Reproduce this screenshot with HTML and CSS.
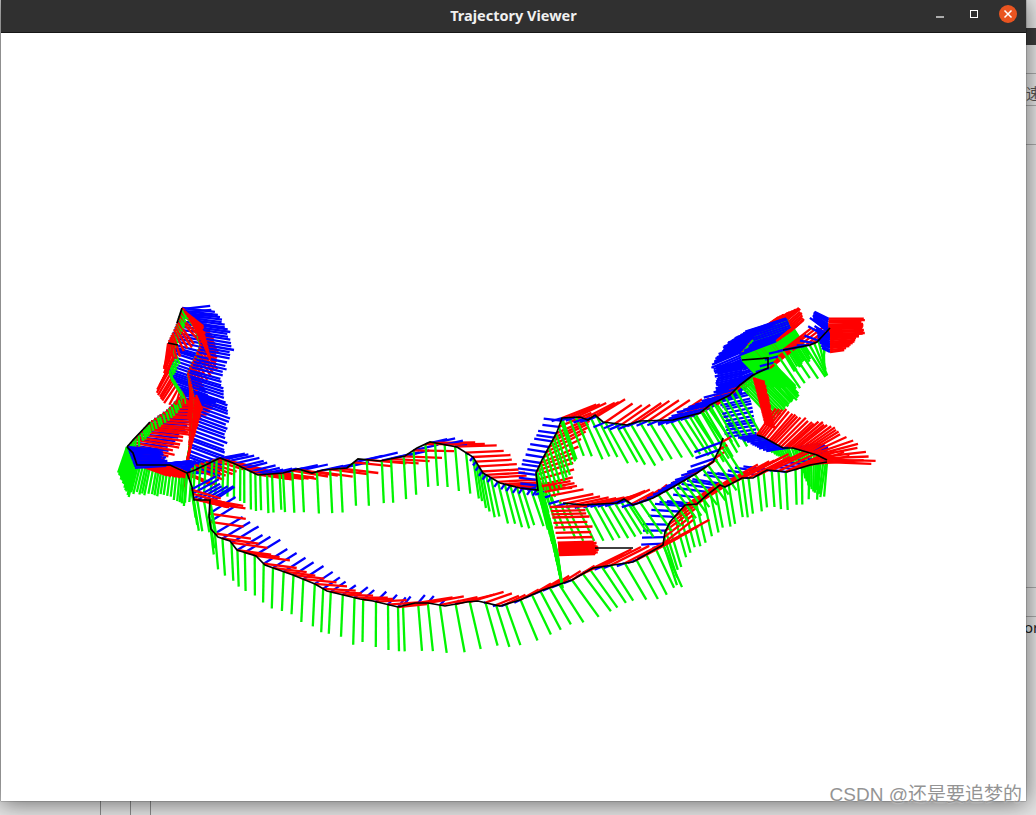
FILE: index.html
```html
<!DOCTYPE html>
<html lang="en">
<head>
<meta charset="utf-8">
<title>Trajectory Viewer</title>
<link rel="stylesheet" href="styles.css">
</head>
<body>
<div class="desktop">
  <div class="behind">
    <div class="behind-band"></div>
    <div class="behind-rule rule-a"></div>
    <div class="behind-rule rule-b"></div>
    <div class="behind-rule rule-c"></div>
    <div class="behind-rule rule-d"></div>
    <div class="behind-rule rule-e"></div>
    <span class="behind-text text-a">速</span>
    <span class="behind-text text-b">or</span>
    <div class="behind-col col-a"></div>
    <div class="behind-col col-b"></div>
    <div class="behind-col col-c"></div>
  </div>
  <section class="window">
    <header class="titlebar">
      <span></span>
      <h1 class="title">Trajectory Viewer</h1>
      <div class="controls">
        <svg class="ctl" width="8" height="8" viewBox="0 0 8 8"><path d="M0 7h8" stroke="#fff" stroke-width="1.2"/></svg>
        <svg class="ctl ctl-max" width="8" height="8" viewBox="0 0 8 8"><rect x=".5" y=".5" width="7" height="7" fill="none" stroke="#fff"/></svg>
        <svg class="ctl-close" width="18" height="18" viewBox="0 0 18 18"><circle cx="9" cy="9" r="9" fill="#e95420"/><path d="M5.5 5.5l7 7M12.5 5.5l-7 7" stroke="#fff" stroke-width="1.5"/></svg>
      </div>
    </header>
    <svg id="scene" class="scene" viewBox="1 33 1025 767" width="1025" height="767"></svg>
  </section>
  <div class="watermark">CSDN @还是要追梦的</div>
</div>
<script src="trajectory.js"></script>
</body>
</html>
```
FILE: styles.css
```css
* { box-sizing: border-box; }
html, body { margin: 0; height: 100%; }
body { background: #e4e4e4; overflow: hidden; font-family: "Noto Sans", "Noto Sans CJK SC", sans-serif; }
.desktop { position: relative; width: 1036px; height: 815px; overflow: hidden; }
.behind { position: absolute; inset: 0; }
.behind-band { position: absolute; left: 1026px; right: 0; top: 28px; height: 17px; background: #3c3c3c; }
.behind-rule { position: absolute; left: 1026px; right: 0; height: 1px; background: #a8a8a8; }
.rule-a { top: 73px; }
.rule-b { top: 105px; }
.rule-c { top: 144px; }
.rule-d { top: 587px; }
.rule-e { top: 616px; }
.behind-text { position: absolute; left: 1026px; font-size: 15px; line-height: 18px; white-space: nowrap; color: #555; }
.text-a { top: 84px; }
.text-b { top: 618px; color: #222; left: 1024px; }
.behind-col { position: absolute; top: 800px; bottom: 0; width: 1px; background: #8a8a8a; }
.col-a { left: 100px; }
.col-b { left: 130px; }
.col-c { left: 150px; }
.window {
  position: absolute; left: 1px; top: 0; width: 1025px; height: 801px;
  display: flex; flex-direction: column; background: #fff;
  box-shadow: 0 2px 22px rgba(0, 0, 0, .55), 0 0 1px rgba(0, 0, 0, .8);
}
.titlebar {
  flex: none; height: 33px; display: grid; grid-template-columns: 1fr auto 1fr; align-items: center;
  background: #303030; border-bottom: 1px solid #161616; color: #fff;
}
.title { margin: 0; font: 700 14.5px/1 "Noto Sans", sans-serif; color: #f0f0f0; padding-bottom: 2px; }
.controls { display: flex; justify-content: flex-end; align-items: center; padding-right: 9px; padding-bottom: 4px; }
.ctl { margin-right: 26px; }
.ctl-max { margin-right: 21px; }
.scene { flex: none; display: block; background: #fff; }
.scene line { stroke-width: 2.3; stroke-linecap: butt; }
.scene .r { stroke: #ff0000; }
.scene .g { stroke: #00f500; }
.scene .b { stroke: #0000ff; }
.scene .k { fill: none; stroke: #000; stroke-width: 1.7; stroke-linejoin: miter; }
.watermark {
  position: absolute; right: 14px; bottom: 7px; font-size: 19px; line-height: 26px; color: #949494;
  font-family: "Liberation Sans", "Noto Sans CJK SC", sans-serif; white-space: nowrap;
  text-shadow: 0 0 2px rgba(255, 255, 255, .8);
}
```
FILE: trajectory.js
```js
// Poses along the camera trajectory: each has a red, green and blue axis and the path is drawn in black.
// k: keyframes [t, green, red, blue] with t the fraction of the section length.
var sections = [
  // left tower, rising along the left side
  { p: [[127,447],[133,440],[150,422],[167,410],[183,393],[168,370],[175,353],[168,343],[177,323],[182,308]], s: 3.2, o: 'gbr',
    k: [[0,[-6,24],[44,10],[38,6]],[.12,[2,10],[44,6],[40,3]],[.35,[3,10],[44,0],[42,-3]],[.5,[3,10],[-14,20],[32,12]],[.75,[5,10],[-8,22],[32,10]],[1,[5,10],[30,24],[30,-4]]] },
  // left tower, coming back down the right side
  { p: [[182,308],[195,325],[200,345],[188,372],[195,400],[193,430],[187,465]], s: 3.2, o: 'gbr',
    k: [[0,[4,8],[28,24],[34,4]],[.3,[2,8],[14,24],[32,6]],[.55,[0,8],[-5,26],[34,12]],[1,[-4,14],[-4,26],[32,12]]] },
  // extra red over the tower
  { p: [[185,312],[205,345]], s: 2.6, o: 'r', k: [[0,[0,0],[18,14],[0,0]],[1,[0,0],[6,18],[0,0]]] },
  { p: [[196,395],[190,450]], s: 2, o: 'r', k: [[0,[0,0],[6,14],[0,0]],[1,[0,0],[-4,14],[0,0]]] },
  // base of the tower
  { p: [[187,473],[170,465],[137,465],[133,453],[127,447]], s: 2.6, o: 'rgb',
    k: [[0,[-2,30],[26,13],[34,0]],[.4,[-5,30],[28,13],[32,-4]],[1,[-9,26],[32,8],[30,2]]] },
  { p: [[127,447],[135,468]], s: 1.8, o: 'gb', k: [[0,[-9,26],[0,0],[32,3]],[1,[-6,28],[0,0],[30,-2]]] },
  // ridge to the middle
  { p: [[187,473],[195,465],[220,458],[233,463],[258,475],[283,473]], s: 6, o: 'gbr',
    k: [[0,[-3,32],[30,12],[30,-4]],[.6,[0,36],[34,6],[24,-6]],[1,[2,38],[36,4],[24,-5]]] },
  { p: [[283,473],[298,469],[312,473],[323,470],[347,468],[358,459],[380,461],[405,456],[417,448],[430,442],[457,447],[473,457]], s: 13, o: 'gbr',
    k: [[0,[2,40],[34,6],[24,-5]],[.5,[2,44],[38,3],[30,-7]],[.85,[3,42],[40,-1],[18,-4]],[1,[5,42],[38,-2],[-3,4]]] },
  { p: [[473,457],[483,473],[500,483],[520,488],[538,490]], s: 6.5, o: 'gbr',
    k: [[0,[6,42],[38,-2],[-3,4]],[1,[14,38],[36,-2],[-4,6]]] },
  // left wall of the middle loop
  { p: [[538,490],[536,473],[542,460],[557,432],[562,418]], s: 5.5, o: 'bgr',
    k: [[0,[10,40],[37,-7],[-18,-2]],[.5,[12,40],[38,-20],[-18,-3]],[1,[14,40],[33,-13],[-17,-2]]] },
  // top of the middle loop
  { p: [[562,418],[580,417],[588,420],[595,415],[603,422],[627,425],[640,421],[673,420],[700,413],[720,403]], s: 8.5, o: 'bgr',
    k: [[0,[14,40],[33,-13],[-10,3]],[.3,[23,41],[27,-19],[-12,5]],[1,[24,34],[37,-23],[-12,5]]] },
  // block beneath the right hand tower
  { p: [[745,380],[752,405],[757,435]], s: 3.4, o: 'b',
    k: [[0,[20,44],[10,22],[-28,8]],[1,[16,46],[8,22],[-30,4]]] },
  { p: [[743,362],[742,395]], s: 1.6, o: 'b', k: [[0,[0,0],[0,0],[-27,5]],[1,[0,0],[0,0],[-25,7]]] },
  // return along the ridge beneath the tower on the right
  { p: [[690,417],[700,413],[710,405],[730,395],[740,385]], s: 6, o: 'brg',
    k: [[0,[27,45],[30,-22],[-32,6]],[1,[25,45],[30,-22],[-30,8]]] },
  // the arc of the right hand tower
  { p: [[740,385],[753,375],[768,368],[768,358],[742,360],[740,353],[757,332],[787,318],[792,330],[775,342]], s: 2.1, o: 'gbr',
    k: [[0,[32,34],[30,-24],[-25,7]],[.35,[28,28],[26,-22],[-27,12]],[.6,[20,26],[22,-15],[-30,12]],[.8,[18,28],[12,-10],[-40,13]],[1,[18,30],[12,-10],[-36,14]]] },
  // out to the hook
  { p: [[770,368],[783,350],[810,345],[817,342],[830,328]], s: 6, o: 'bgr',
    k: [[0,[22,32],[28,-22],[-14,4]],[.6,[20,30],[26,-20],[-12,2]],[1,[-8,32],[18,-6],[-18,-14]]] },
  // the hook and its tip
  { p: [[830,352],[830,334]], s: 1.8, o: 'br', k: [[0,[-6,30],[14,-2],[-8,-4]],[1,[-8,30],[34,-2],[-16,-10]]] },
  { p: [[830,334],[828,325],[829,317]], s: 1.8, o: 'br', k: [[0,[-8,30],[34,-1],[-16,-14]],[1,[-6,20],[35,0],[-14,-6]]] },
  // right hand wing, upper edge
  { p: [[757,435],[763,437],[783,448],[793,448],[817,455],[827,460]], s: 2.6, o: 'gbr',
    k: [[0,[6,14],[20,-28],[-20,3]],[.4,[6,14],[28,-26],[-18,3]],[.55,[5,16],[30,-24],[22,-5]],[.72,[2,36],[33,-20],[22,-5]],[1,[-6,36],[48,2],[-8,2]]] },
  // right hand wing, lower edge coming back
  { p: [[827,462],[810,465],[787,472],[767,470],[753,478],[742,478],[725,487],[720,485],[707,495],[697,504],[685,505],[670,522],[665,532],[663,545]], s: 8, o: 'gbr',
    k: [[0,[-3,36],[46,2],[-20,-3]],[.15,[1,36],[40,-18],[-24,-3]],[.5,[6,38],[45,-24],[-36,-6]],[1,[14,42],[30,-24],[-22,1]]] },
  { p: [[663,545],[633,562],[593,568],[572,580]], s: 11, o: 'gbr',
    k: [[0,[18,40],[44,-24],[-10,3]],[1,[28,35],[38,-18],[-6,3]]] },
  // thick red column on top of the wing
  { p: [[753,378],[760,405],[765,425]], s: 1.4, o: 'r', k: [[0,[0,0],[12,4],[0,0]],[1,[0,0],[10,4],[0,0]]] },
  // lowest part of the large loop
  { p: [[572,580],[543,590],[520,600],[500,606],[478,601],[467,602],[445,606],[428,603],[415,603],[398,607]], s: 13, o: 'gbr',
    k: [[0,[26,36],[22,-14],[-8,3]],[.35,[16,42],[18,-10],[-6,3]],[.7,[8,46],[38,-9],[4,-4]],[1,[1,46],[30,-3],[8,-10]]] },
  { p: [[398,607],[373,601],[360,599],[327,591],[315,584],[293,575],[265,565],[256,556],[237,550],[230,541],[218,537],[211,529],[209,517],[210,500]], s: 10.5, o: 'gbr',
    k: [[0,[1,46],[30,-3],[8,-10]],[.25,[-2,44],[32,1],[14,-10]],[.5,[-2,40],[32,4],[22,-14]],[.85,[3,35],[35,5],[27,-16]],[1,[6,32],[35,5],[24,-16]]] },
  { p: [[210,500],[194,500],[190,484]], s: 6, o: 'gbr', k: [[0,[6,34],[34,6],[24,-14]],[1,[4,28],[30,10],[26,-14]]] },
  // lower middle loop
  { p: [[537,487],[563,503],[583,505],[617,503],[624,499],[633,505],[653,498],[673,487],[697,473],[713,462],[720,448],[723,438]], s: 8, o: 'bgr',
    k: [[0,[12,36],[34,-6],[-10,3]],[.3,[20,35],[30,-7],[-10,3]],[.55,[23,32],[18,-15],[-10,3]],[.8,[22,30],[10,-8],[-20,6]],[1,[20,32],[8,-4],[-27,10]]] },
  // the thick green band with the stack of red rows
  { p: [[550,507],[558,544]], s: 4.5, o: 'r', k: [[0,[0,0],[36,-1],[0,0]],[1,[0,0],[36,-1],[0,0]]] },
  { p: [[558,544],[559,556]], s: 1, o: 'r', k: [[0,[0,0],[38,-1],[0,0]],[1,[0,0],[38,-1],[0,0]]] },
  { p: [[537,473],[550,520],[558,556]], s: 2, o: 'g', k: [[0,[5,32],[0,0],[0,0]],[1,[5,34],[0,0],[0,0]]] }
];

var blackOnTop = [
  [[182,308],[177,323]],
  [[168,343],[178,345]],
  [[127,447],[133,440],[150,422]],
  [[127,447],[133,453],[137,465],[170,465],[187,473],[192,487],[194,500],[210,500],[209,517],[211,529],[218,537],[230,541],[237,550],[256,556],[265,565],[293,575],[315,584],[327,591],[360,599],[373,601],[398,607],[415,603],[428,603],[445,606],[467,602],[478,601],[500,606],[520,600],[543,590],[572,580],[593,568],[633,562],[663,545],[665,532],[670,522],[685,505],[697,504],[707,495],[720,485],[725,487],[742,478],[753,478],[767,470],[787,472],[810,465],[827,462]],
  [[187,473],[195,470],[220,458],[233,463],[258,475],[283,473],[298,469],[312,473],[323,470],[347,468],[358,459],[380,461],[405,456],[417,448],[430,442],[457,447],[473,457],[483,473],[500,483],[520,488],[538,490],[536,473],[542,460],[557,432],[562,418],[580,417],[588,420],[595,415],[603,422],[627,425],[640,421],[673,420],[700,413],[710,405],[730,395],[740,385],[753,375],[768,368],[768,358],[742,360]],
  [[563,503],[583,505],[617,503],[624,499],[633,505],[653,498],[673,487],[697,473],[713,462],[720,448],[723,438]],
  [[595,548],[633,548]],
  [[757,435],[763,437],[783,448],[793,448],[817,455],[827,460]],
  [[783,350],[810,345],[817,342],[830,328]]
];

var NS = 'http://www.w3.org/2000/svg';
var scene = document.getElementById('scene');
var seed = 17;
function rnd() { seed = (seed * 16807) % 2147483647; return seed / 2147483647; }

function add(cls, x1, y1, x2, y2) {
  var l = document.createElementNS(NS, 'line');
  l.setAttribute('class', cls);
  l.setAttribute('x1', x1.toFixed(1));
  l.setAttribute('y1', y1.toFixed(1));
  l.setAttribute('x2', x2.toFixed(1));
  l.setAttribute('y2', y2.toFixed(1));
  scene.appendChild(l);
}

function polyline(pts) {
  var e = document.createElementNS(NS, 'polyline');
  e.setAttribute('class', 'k');
  e.setAttribute('points', pts.map(function (q) { return q.join(','); }).join(' '));
  scene.appendChild(e);
}

function keyAt(k, t) {
  for (var i = 0; i < k.length - 1; i++) {
    if (t <= k[i + 1][0]) {
      var a = k[i], b = k[i + 1], u = (t - a[0]) / ((b[0] - a[0]) || 1);
      return [1, 2, 3].map(function (c) {
        return [a[c][0] + (b[c][0] - a[c][0]) * u, a[c][1] + (b[c][1] - a[c][1]) * u];
      });
    }
  }
  var z = k[k.length - 1];
  return [z[1], z[2], z[3]];
}

function drawSection(sec) {
  var i, lens = [0];
  for (i = 1; i < sec.p.length; i++) {
    lens[i] = lens[i - 1] + Math.hypot(sec.p[i][0] - sec.p[i - 1][0], sec.p[i][1] - sec.p[i - 1][1]);
  }
  var total = lens[lens.length - 1], d = 0, seg = 0;
  while (d <= total) {
    while (seg < sec.p.length - 2 && d > lens[seg + 1]) seg++;
    var u = (d - lens[seg]) / (lens[seg + 1] - lens[seg]);
    var x = sec.p[seg][0] + (sec.p[seg + 1][0] - sec.p[seg][0]) * u;
    var y = sec.p[seg][1] + (sec.p[seg + 1][1] - sec.p[seg][1]) * u;
    var v = keyAt(sec.k, d / total);
    var scale = 0.94 + rnd() * 0.12;
    var map = { g: v[0], r: v[1], b: v[2] };
    sec.o.split('').forEach(function (c) {
      add(c, x, y, x + map[c][0] * scale, y + map[c][1] * scale);
    });
    d += sec.s * (0.7 + rnd() * 0.6);
  }
}

sections.forEach(drawSection);
blackOnTop.forEach(polyline);
```
